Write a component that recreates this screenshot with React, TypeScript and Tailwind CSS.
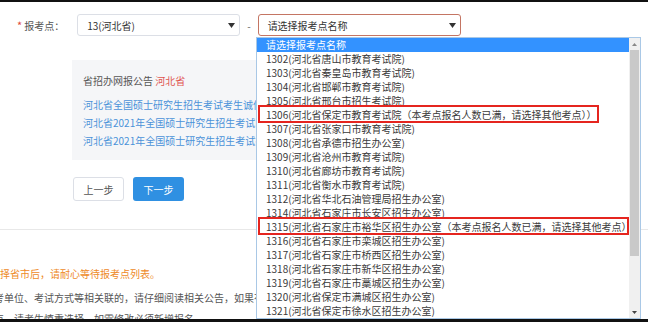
import React from "react";

const items = [
  "请选择报考点名称",
  "1302(河北省唐山市教育考试院)",
  "1303(河北省秦皇岛市教育考试院)",
  "1304(河北省邯郸市教育考试院)",
  "1305(河北省邢台市招生考试院)",
  "1306(河北省保定市教育考试院（本考点报名人数已满，请选择其他考点））",
  "1307(河北省张家口市教育考试院)",
  "1308(河北省承德市招生办公室)",
  "1309(河北省沧州市教育考试院)",
  "1310(河北省廊坊市教育考试院)",
  "1311(河北省衡水市教育考试院)",
  "1312(河北省华北石油管理局招生办公室)",
  "1314(河北省石家庄市长安区招生办公室)",
  "1315(河北省石家庄市裕华区招生办公室（本考点报名人数已满，请选择其他考点））",
  "1316(河北省石家庄市栾城区招生办公室)",
  "1317(河北省石家庄市桥西区招生办公室)",
  "1318(河北省石家庄市新华区招生办公室)",
  "1319(河北省石家庄市藁城区招生办公室)",
  "1320(河北省保定市满城区招生办公室)",
  "1321(河北省保定市徐水区招生办公室)",
];

const font = { fontFamily: '"Noto Sans CJK SC", "Noto Sans", sans-serif' };

function Caret() {
  return (
    <svg width="7" height="5" viewBox="0 0 7 5" className="shrink-0">
      <path d="M0 0 H7 L3.5 5 Z" fill="#333" />
    </svg>
  );
}

export default function App() {
  return (
    <div
      className="relative flex h-[322px] w-[648px] flex-col overflow-hidden bg-white text-[10px] text-[#333]"
      style={font}
    >
      <div className="h-[2px] shrink-0 bg-[#111]" />
      <div className="relative min-h-0 flex-1 overflow-hidden">
        {/* form row */}
        <div className="mt-[12px] flex h-[22px] items-center pl-[17px]">
          <span className="mr-[2px] text-[11px] leading-none text-[#e0493a]">*</span>
          <span className="text-[#555]">报考点：</span>
          <div className="ml-[13px] flex h-[22px] w-[163px] items-center justify-between rounded-[3px] border border-[#dcdfe6] pl-[9px] pr-[4px]">
            <span>13(河北省)</span>
            <Caret />
          </div>
          <span className="mx-[7px] text-[#666]">-</span>
          <div className="flex h-[22px] w-[203px] items-center justify-between rounded-[3px] border border-[#c47563] pl-[9px] pr-[4px]">
            <span>请选择报考点名称</span>
            <Caret />
          </div>
        </div>

        {/* notice panel */}
        <div className="ml-[72px] mt-[24px] flex h-[100px] w-[480px] flex-col bg-[#f5f6f8] pl-[11px] pt-[14px]">
          <div className="leading-[14px] text-[#555]">
            省招办网报公告 <span className="text-[#e0554f]">河北省</span>
          </div>
          <div className="mt-[10px] flex flex-col gap-[4px] whitespace-nowrap leading-[14px] text-[#4a92d8]">
            <span>河北省全国硕士研究生招生考试考生诚信考试承诺书</span>
            <span>河北省2021年全国硕士研究生招生考试网上报名公告</span>
            <span>河北省2021年全国硕士研究生招生考试报考点公告</span>
          </div>
        </div>

        {/* buttons */}
        <div className="ml-[73px] mt-[17px] flex gap-[9px]">
          <div className="flex h-[24px] w-[51px] items-center justify-center rounded-[3px] border border-[#dcdfe6] bg-white text-[#555]">
            上一步
          </div>
          <div className="flex h-[24px] w-[51px] items-center justify-center rounded-[3px] bg-[#2f90e2] text-white">
            下一步
          </div>
        </div>

        <div className="mt-[28px] h-px w-full bg-[#e8e8e8]" />

        <div className="ml-[-10px] mt-[37px] whitespace-nowrap leading-[14px] text-[#ee8a28]">
          选择省市后，请耐心等待报考点列表。
        </div>
        <div className="ml-[-6px] mt-[10px] whitespace-nowrap leading-[14px] text-[#555]">
          考单位、考试方式等相关联的，请仔细阅读相关公告，如果有
        </div>
        <div className="ml-[-6px] mt-[7px] whitespace-nowrap leading-[14px] text-[#555]">
          点，请考生慎重选择，如需修改必须新增报名
        </div>

        {/* dropdown overlay */}
        <div className="absolute left-[256px] top-[35px] flex h-[282px] w-[385px] border border-[#a9c8e6] bg-white">
          <div className="min-w-0 flex-1 overflow-hidden">
            {items.map((t, i) => (
              <div
                key={i}
                className={
                  i === 0
                    ? "h-[14px] whitespace-nowrap bg-[#3392ff] pl-[9px] leading-[14px] text-white"
                    : "h-[14px] whitespace-nowrap pl-[9px] leading-[14px] text-[#3a3a3a]"
                }
              >
                {t}
              </div>
            ))}
          </div>
          <div className="flex w-[11px] shrink-0 flex-col bg-[#f0f0f0]">
            <div className="flex h-[12px] items-center justify-center">
              <svg width="5" height="3" viewBox="0 0 5 3">
                <path d="M0 3 H5 L2.5 0 Z" fill="#888" />
              </svg>
            </div>
            <div className="mx-[1px] h-[206px] bg-[#c9c9c9]" />
            <div className="flex-1" />
            <div className="flex h-[12px] items-center justify-center">
              <svg width="5" height="3" viewBox="0 0 5 3">
                <path d="M0 0 H5 L2.5 3 Z" fill="#444" />
              </svg>
            </div>
          </div>
        </div>

        {/* red annotation boxes */}
        <div className="pointer-events-none absolute left-[258px] top-[103px] h-[18px] w-[341px] border-2 border-[#e5251f]" />
        <div className="pointer-events-none absolute left-[258px] top-[215px] h-[18px] w-[371px] border-2 border-[#e5251f]" />
      </div>
      <div className="h-[3px] shrink-0 bg-[#111]" />
    </div>
  );
}
